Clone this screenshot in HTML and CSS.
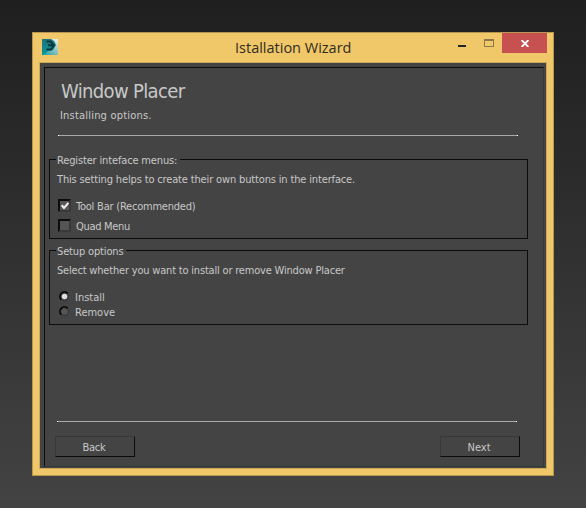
FILE: index.html
```html
<!DOCTYPE html>
<html lang="en">
<head>
<meta charset="utf-8">
<title>Istallation Wizard</title>
<link rel="stylesheet" href="styles.css">
</head>
<body>
<main class="window">
  <header class="titlebar">
    <svg class="app-icon" width="16" height="16" viewBox="0 0 16 16">
      <defs>
        <linearGradient id="sky" x1="1" y1="0" x2=".2" y2="1"><stop offset="0" stop-color="#f2f5f0"/><stop offset=".5" stop-color="#8fc4c4"/><stop offset="1" stop-color="#2aa5a6"/></linearGradient>
        <linearGradient id="side" x1="0" y1="0" x2="0" y2="1"><stop offset="0" stop-color="#1d7479"/><stop offset="1" stop-color="#089a9c"/></linearGradient>
      </defs>
      <path fill="url(#sky)" d="M0 0h16v16H0z"/>
      <path fill="url(#side)" d="M0 0h9l3 2 2 4-3 5-5 1-4 4H0z"/>
      <path fill="none" stroke="#06383f" stroke-width="2" d="M4.500 2.500h4L12 6.300 9 10.500H4.500M6 6.300h5"/>
    </svg>
    <h1 class="title"><span class="t-title">Istallation Wizard</span></h1>
    <div class="controls">
      <i class="minimize"></i>
      <i class="maximize"></i>
      <button class="close" aria-label="Close"><svg width="8" height="7" viewBox="0 0 8 7"><path d="M.5 0 7.500 7M7.500 0 .5 7" stroke="#fff" stroke-width="1.900"/></svg></button>
    </div>
  </header>
  <div class="client">
    <section class="page">
      <h2 class="heading"><span class="t-heading">Window Placer</span></h2>
      <p class="sub"><span class="t-sub">Installing options.</span></p>
      <div class="rule rule-top"></div>
      <section class="group menus">
        <h3 class="legend"><span class="t-menus">Register inteface menus:</span></h3>
        <p class="text"><span class="t-help">This setting helps to create their own buttons in the interface.</span></p>
        <label class="option check-row"><span class="check"><svg width="8" height="8" viewBox="0 0 8 8"><path d="M.7 3.200 3 6 7.300 1" fill="none" stroke="#eee" stroke-width="2"/></svg></span><span class="name t-tool">Tool Bar (Recommended)</span></label>
        <label class="option check-row"><span class="check"></span><span class="name t-quad">Quad Menu</span></label>
      </section>
      <section class="group setup">
        <h3 class="legend"><span class="t-setup">Setup options</span></h3>
        <p class="text"><span class="t-select">Select whether you want to install or remove Window Placer</span></p>
        <label class="option radio-row"><svg class="radio" width="11" height="11" viewBox="0 0 12 12"><circle cx="6" cy="6" r="4.400" fill="#484848" stroke="#393939" stroke-width="1.600"/><path d="M2.500 9.500A4.700 4.700 0 0 1 9.500 2.500" fill="none" stroke="#090909" stroke-width="1.900"/><circle cx="6" cy="6" r="3" fill="#ddd"/></svg><span class="name t-install">Install</span></label>
        <label class="option radio-row"><svg class="radio" width="11" height="11" viewBox="0 0 12 12"><circle cx="6" cy="6" r="4.400" fill="#555" stroke="#393939" stroke-width="1.600"/><path d="M2.500 9.500A4.700 4.700 0 0 1 9.500 2.500" fill="none" stroke="#090909" stroke-width="1.900"/></svg><span class="name t-remove">Remove</span></label>
      </section>
      <div class="rule rule-bottom"></div>
      <footer class="actions">
        <button class="button"><span class="t-back">Back</span></button>
        <button class="button"><span class="t-next">Next</span></button>
      </footer>
    </section>
  </div>
</main>
</body>
</html>
```
FILE: styles.css
```css
* { box-sizing: border-box; }
body {
  margin: 0;
  height: 508px;
  padding: 32px;
  overflow: hidden;
  background: linear-gradient(#1f1f1f, #434343);
  color: #c8c8c8;
  font: 11px/14px "DejaVu Sans Condensed", "DejaVu Sans", sans-serif;
  font-stretch: condensed;
}
h1, h2, h3, p { margin: 0; font-weight: normal; font-size: inherit; }
button { padding: 0; border: 0; font: inherit; color: inherit; }
span { white-space: nowrap; }
.window {
  width: 522px;
  height: 444px;
  padding: 0 6px 6px;
  border: 1px solid #b7974f;
  background: #f0c869;
}
.titlebar { display: flex; height: 29px; }
.app-icon { margin: 6px 0 0 3px; }
.title {
  flex: 1;
  padding: 5px 0 0 177px;
  color: #302b21;
  font: 14.5px/20px "Open Sans", sans-serif;
}
.controls { display: flex; align-items: flex-start; }
.minimize { width: 8px; height: 2px; margin: 12px 18px 0 0; background: #252525; }
.maximize { width: 10px; height: 8px; margin: 6px 8px 0 0; border: 1px solid #8d7947; border-top-width: 2px; }
.close { display: flex; align-items: center; justify-content: center; width: 45px; height: 20px; background: #c75050; }
.client {
  height: 407px;
  padding: 4px 2px 1px 4px;
  border: 1px solid #cca958;
  background: #444;
}
.page {
  height: 400px;
  padding: 0 15px 0 4px;
  border: 1px solid;
  border-color: #0c0c0c #383838 #383838 #0c0c0c;
}
.heading { padding: 10px 0 0 12px; font-size: 20px; line-height: 26px; }
.sub { padding: 5px 0 0 11px; }
.rule { width: 460px; height: 1px; background: #aaa; border: solid #fff; border-width: 0 1px; }
.rule-top { margin: 12px 0 0 9px; }
.group { width: 479px; border: 1px solid #0c0c0c; padding-left: 7px; }
.menus { height: 80px; margin-top: 23px; }
.setup { height: 75px; margin-top: 11px; }
.legend { width: max-content; margin: -7px 0 0 -1px; padding: 1px 3px 0 1px; background: #444; }
.text { margin-top: 5px; }
.option { display: flex; align-items: flex-start; }
.name { margin-top: 1px; }
.check-row { height: 20px; gap: 5px; padding-left: 1px; }
.text + .check-row { margin-top: 12px; }
.check {
  display: flex;
  align-items: center;
  justify-content: center;
  width: 13px;
  height: 13px;
  border: 2px solid;
  border-color: #0c0c0c #393939 #393939 #0c0c0c;
  background: #555;
}
.radio-row { height: 15px; gap: 6px; padding-left: 2px; }
.radio-row .name { margin: 1px 0 0 -1px; }
.text + .radio-row { margin-top: 12px; }
.radio { margin-top: 1px; }
.rule-bottom { margin: 96px 0 0 8px; }
.actions { display: flex; justify-content: space-between; width: 465px; margin: 14px 0 0 6px; }
.button {
  width: 80px;
  height: 21px;
  padding: 2px 2px 0 0;
  border: 1px solid;
  border-color: #383838 #0c0c0c #0c0c0c #383838;
  background: #444;
}
.t-heading { letter-spacing: -.65px; }
.t-sub { letter-spacing: .2px; }
.t-menus { letter-spacing: -.15px; }
.t-help { letter-spacing: -.15px; }
.t-tool { letter-spacing: -.22px; }
.t-quad { letter-spacing: -.3px; }
.t-setup { letter-spacing: -.15px; }
.t-select { letter-spacing: -.19px; }
.t-back { letter-spacing: -.2px; }
```
